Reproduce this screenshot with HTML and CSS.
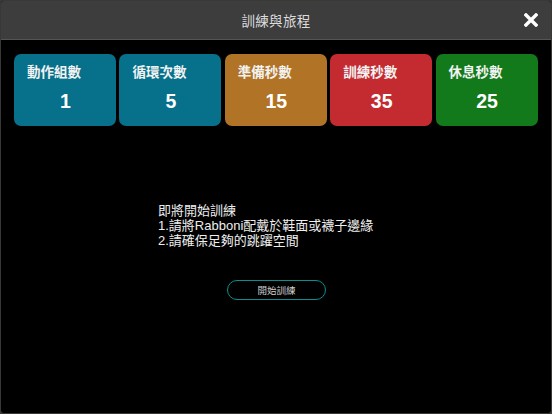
FILE: index.html
```html
<!DOCTYPE html>
<html lang="zh-Hant">
<head>
<meta charset="utf-8">
<link rel="stylesheet" href="styles.css">
</head>
<body>
<div class="panel">
  <header class="bar">
    <div class="title">訓練與旅程</div>
    <div class="close">
      <svg width="14" height="14" viewBox="0 0 14 14"><path d="M2 2 L12 12 M12 2 L2 12" stroke="#fff" stroke-width="3.4" stroke-linecap="square"/></svg>
    </div>
  </header>
  <main class="content">
    <div class="cards">
      <div class="card teal"><div class="label">動作組數</div><div class="num">1</div></div>
      <div class="card teal"><div class="label">循環次數</div><div class="num">5</div></div>
      <div class="card orange"><div class="label">準備秒數</div><div class="num">15</div></div>
      <div class="card red"><div class="label">訓練秒數</div><div class="num">35</div></div>
      <div class="card green"><div class="label">休息秒數</div><div class="num">25</div></div>
    </div>
    <div class="msg">
      <div>即將開始訓練</div>
      <div>1.請將Rabboni配戴於鞋面或襪子邊緣</div>
      <div>2.請確保足夠的跳躍空間</div>
    </div>
    <div class="btnrow"><button class="start">開始訓練</button></div>
  </main>
</div>
</body>
</html>
```
FILE: styles.css
```css
html, body { margin: 0; padding: 0; }
body {
  width: 552px; height: 414px;
  background: #3a3834;
  font-family: "Noto Sans CJK TC", "Liberation Sans", sans-serif;
  overflow: hidden;
}
.panel {
  box-sizing: border-box;
  margin: 1px 1px 0 1px;
  width: 550px; height: 412px;
  background: #000;
  border-radius: 3px;
  overflow: hidden;
  display: flex; flex-direction: column;
}
.bar {
  height: 38px;
  flex: none;
  background: #3d3d3d;
  border-bottom: 1px solid #555;
  position: relative;
  display: flex; align-items: center; justify-content: center;
}
.title { color: #dcdcdc; font-size: 13.5px; letter-spacing: 0.3px; }
.close { position: absolute; right: 13px; top: 12px; width: 14px; height: 14px; }
.close svg { display: block; }
.content { flex: 1; display: flex; flex-direction: column; }
.cards {
  display: flex; gap: 3.4px;
  padding: 14px 0 0 13px;
}
.card {
  width: 102px; height: 72px;
  border-radius: 7px;
  box-sizing: border-box;
  color: #fff;
  display: flex; flex-direction: column;
}
.teal { background: #07708a; }
.orange { background: #b17426; }
.red { background: #c42b31; }
.green { background: #137a1b; }
.label {
  font-size: 13.5px; font-weight: 700;
  padding: 8px 0 0 13px; line-height: 18px;
  color: #f2f2f2;
}
.num {
  text-align: center;
  font-family: "Liberation Sans", Arial, sans-serif;
  font-weight: 700; font-size: 19.5px;
  margin-top: 10px; padding-left: 1px;
}
.msg {
  margin: 77px 0 0 157px;
  color: #eeeeee;
  font-family: "Liberation Sans", "Noto Sans CJK TC", sans-serif;
  font-size: 13px;
  line-height: 15px;
}
.btnrow { margin: 32px 0 0 226px; }
.start {
  width: 99px; height: 20px;
  background: #000;
  border: 1.5px solid #0b8e8e;
  border-radius: 10px;
  color: #cfcfcf;
  font-family: "Noto Sans CJK TC", sans-serif;
  font-size: 9.5px;
  padding: 0;
  display: flex; align-items: center; justify-content: center;
}
```
